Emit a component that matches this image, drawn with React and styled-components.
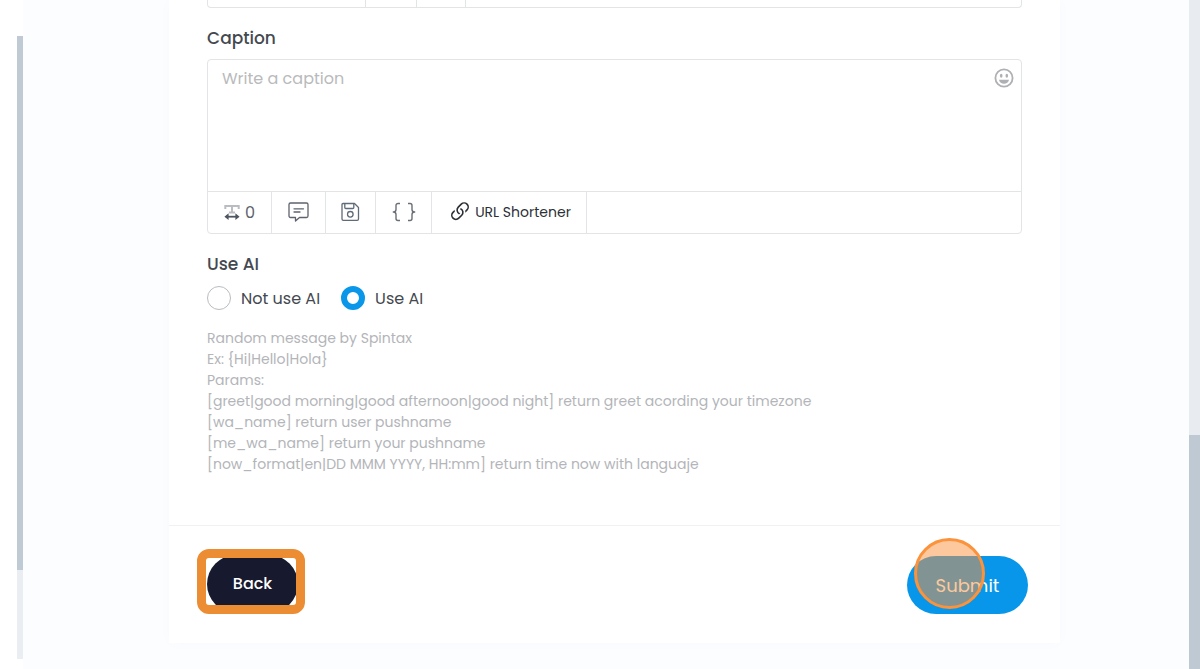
import { useState } from "react";
import styled, { createGlobalStyle } from "styled-components";
import { BsLink45Deg } from "react-icons/bs";

const hints = [
  "Random message by Spintax",
  "Ex: {Hi|Hello|Hola}",
  "Params:",
  "[greet|good morning|good afternoon|good night] return greet acording your timezone",
  "[wa_name] return user pushname",
  "[me_wa_name] return your pushname",
  "[now_format|en|DD MMM YYYY, HH:mm] return time now with languaje",
];

const App = () => {
  const [caption, setCaption] = useState("");
  const [ai, setAi] = useState("use");

  return (
    <Page>
      <GlobalStyle />
      <Sidebar>
        <SideTrack>
          <SideThumb />
        </SideTrack>
      </Sidebar>
      <Main>
        <Card>
          <Body>
            <PrevToolbar>
              <PrevCell $width={158} />
              <PrevCell $width={51} />
              <PrevCell $width={49} />
            </PrevToolbar>

            <Label htmlFor="caption">Caption</Label>
            <Editor>
              <InputRow>
                <TextArea
                  id="caption"
                  placeholder="Write a caption"
                  value={caption}
                  onChange={(e) => setCaption(e.target.value)}
                />
                <EmojiButton type="button" aria-label="Insert emoji">
                  <EmojiIcon />
                </EmojiButton>
              </InputRow>
              <Toolbar>
                <Counter>
                  <WidthIcon />
                  {caption.length}
                </Counter>
                <Tool type="button" $width={54} aria-label="Saved captions">
                  <CommentIcon />
                </Tool>
                <Tool type="button" $width={50} aria-label="Save caption">
                  <SaveIcon />
                </Tool>
                <Tool type="button" $width={56} aria-label="Variables">
                  <BracesIcon />
                </Tool>
                <Tool type="button" $width={155}>
                  <BsLink45Deg size={26} />
                  URL Shortener
                </Tool>
              </Toolbar>
            </Editor>

            <Group>
              <Label as="legend">Use AI</Label>
              <Options>
                <Option>
                  <Radio
                    name="ai"
                    checked={ai === "none"}
                    onChange={() => setAi("none")}
                  />
                  Not use AI
                </Option>
                <Option>
                  <Radio
                    name="ai"
                    checked={ai === "use"}
                    onChange={() => setAi("use")}
                  />
                  Use AI
                </Option>
              </Options>
            </Group>

            <Hints>
              {hints.map((hint) => (
                <li key={hint}>{hint}</li>
              ))}
            </Hints>
          </Body>

          <Footer>
            <Highlight>
              <BackButton type="button">Back</BackButton>
            </Highlight>
            <SubmitButton type="submit">
              Submit
              <ClickMark />
            </SubmitButton>
          </Footer>
        </Card>
      </Main>
      <PageTrack>
        <PageThumb />
      </PageTrack>
    </Page>
  );
};

export default App;

const EmojiIcon = () => (
  <svg width="20" height="20" viewBox="0 0 20 20" fill="none">
    <circle cx="10" cy="10" r="8.6" stroke="#aeb0b3" strokeWidth="1.8" />
    <ellipse cx="7.2" cy="7.8" rx="1.3" ry="2" fill="#aeb0b3" />
    <ellipse cx="12.8" cy="7.8" rx="1.3" ry="2" fill="#aeb0b3" />
    <path d="M5 11.8h10c-.5 2.6-2.5 4-5 4s-4.5-1.4-5-4z" fill="#aeb0b3" />
  </svg>
);

const WidthIcon = () => (
  <svg width="16" height="16" viewBox="0 0 16 16" fill="none">
    <path d="M1.3 4V1h13.4v3M8 1v7M5 7.5h6" stroke="#b9bdc2" strokeWidth="2" />
    <path d="M2 11.700h12" stroke="#4f5660" strokeWidth="1.8" />
    <path d="M4.600 8.300L.4 11.700l4.200 3.400zM11.400 8.300l4.200 3.400-4.200 3.400z" fill="#4f5660" />
  </svg>
);

const CommentIcon = () => (
  <svg width="22" height="22" viewBox="0 0 22 22" fill="none" stroke="#5e646d" strokeWidth="1.3" strokeLinejoin="round" strokeLinecap="round">
    <path d="M2.500 2h16A1.500 1.500 0 0 1 20 3.500V15a1.500 1.500 0 0 1-1.500 1.500h-7l-4 3.500v-3.500h-5A1.500 1.500 0 0 1 1 15V3.500A1.500 1.500 0 0 1 2.500 2z" />
    <path d="M6 7.800h9.500M6 11h6" />
  </svg>
);

const SaveIcon = () => (
  <svg width="20" height="20" viewBox="0 0 20 20" fill="none" stroke="#5e6b78" strokeWidth="1.3" strokeLinejoin="round">
    <path d="M2 1.500h11.500l4 4v11.500a1.300 1.300 0 0 1-1.300 1.300H2.300A1.300 1.300 0 0 1 1 17V2.500a1 1 0 0 1 1-1z" />
    <path d="M3.800 1.500v4a1 1 0 0 0 1 1h7a1 1 0 0 0 1-1v-4" />
    <circle cx="9.3" cy="12.3" r="2.8" />
  </svg>
);

const BracesIcon = () => (
  <svg width="24" height="20" viewBox="0 0 24 20" fill="none" stroke="#6a7077" strokeWidth="1.4" strokeLinejoin="round">
    <path d="M8 1.500H6a2 2 0 0 0-2 2V7.500Q4 10 1.300 10Q4 10 4 12.500v4a2 2 0 0 0 2 2h2" />
    <path d="M16 1.500h2a2 2 0 0 1 2 2V7.500Q20 10 22.700 10Q20 10 20 12.500v4a2 2 0 0 1-2 2h-2" />
  </svg>
);

const GlobalStyle = createGlobalStyle`
  * {
    box-sizing: border-box;
  }

  body {
    margin: 0;
    background-color: #fcfdff;
    color: #444950;
    font-family: Poppins, Inter, sans-serif;
    font-size: 16px;
  }

  button, textarea {
    font-family: inherit;
  }
`;

const Page = styled.div`
  display: flex;
  min-height: 100vh;
`;

const Sidebar = styled.aside`
  display: flex;
  justify-content: flex-end;
  width: 23px;
  padding: 36px 0 10px;
  background-color: white;
`;

const SideTrack = styled.div`
  display: flex;
  flex-direction: column;
  width: 6px;
  background-color: #eaedf1;

  &::after {
    content: "";
    flex: 1;
  }
`;

const SideThumb = styled.div`
  flex: 6;
  background-color: #c0cad4;
`;

const PageTrack = styled.div`
  display: flex;
  flex-direction: column;
  width: 11px;
  background-color: #e8ecf0;

  &::before {
    content: "";
    flex: 13;
  }
`;

const PageThumb = styled.div`
  flex: 7;
  background-color: #bfc9d4;
`;

const Main = styled.main`
  flex: 1;
  min-width: 0;
  padding: 0 129px 26px 146px;
`;

const Card = styled.form`
  background-color: white;
  box-shadow: 0 0 14px rgba(60, 80, 140, 0.02);
`;

const Body = styled.div`
  padding: 0 38px 50px;
`;

const PrevToolbar = styled.div`
  display: flex;
  height: 8px;
  border: 1px solid #e2e4e6;
  border-top: none;
  border-radius: 0 0 4px 4px;
`;

const PrevCell = styled.div`
  width: ${({ $width }) => $width}px;
  border-right: 1px solid #e2e4e6;
`;

const Label = styled.label`
  display: block;
  padding: 0;
  margin: 18px 0 9px;
  font-size: 17px;
  font-weight: 500;
  line-height: 24px;
`;

const Editor = styled.div`
  border: 1px solid #e2e4e6;
  border-radius: 4px;
`;

const InputRow = styled.div`
  display: flex;
  align-items: flex-start;
  padding-right: 7px;
`;

const TextArea = styled.textarea`
  flex: 1;
  height: 131px;
  padding: 7px 14px;
  border: none;
  outline: none;
  resize: none;
  background: transparent;
  color: #444950;
  font-size: 16px;
  line-height: 24px;

  &::placeholder {
    color: #b9babc;
    opacity: 1;
  }
`;

const EmojiButton = styled.button`
  display: flex;
  padding: 0;
  margin-top: 8px;
  border: none;
  background: none;
  cursor: pointer;
`;

const Toolbar = styled.div`
  display: flex;
  height: 42px;
  border-top: 1px solid #e2e4e6;
`;

const Counter = styled.div`
  display: flex;
  align-items: center;
  justify-content: center;
  gap: 5px;
  width: 64px;
  border-right: 1px solid #e2e4e6;
  color: #5e646d;
`;

const Tool = styled.button`
  display: flex;
  align-items: center;
  justify-content: center;
  gap: 2px;
  width: ${({ $width }) => $width}px;
  padding: 0 0 1px;
  border: none;
  border-right: 1px solid #e2e4e6;
  background: none;
  color: #2b2f36;
  font-size: 14px;
  white-space: nowrap;
  cursor: pointer;
`;

const Group = styled.fieldset`
  margin: 18px 0 17px;
  padding: 0;
  border: none;

  legend {
    margin-top: 0;
  }
`;

const Options = styled.div`
  display: flex;
  gap: 21px;
`;

const Option = styled.label`
  display: flex;
  align-items: center;
  gap: 10px;
  height: 26px;
  cursor: pointer;
`;

const Radio = styled.input.attrs({ type: "radio" })`
  appearance: none;
  width: 24px;
  height: 24px;
  margin: 0;
  border: 1px solid #b8bcc1;
  border-radius: 50%;
  background-color: white;

  &:checked {
    border: 6px solid #0a97ea;
  }
`;

const Hints = styled.ul`
  margin: 0;
  padding: 0;
  list-style: none;
  color: #b3b5b9;
  font-size: 14px;
  line-height: 21px;
`;

const Footer = styled.footer`
  display: flex;
  align-items: flex-end;
  justify-content: space-between;
  padding: 23px 32px 29px 28px;
  border-top: 1px solid #eff1f3;
`;

const Highlight = styled.div`
  display: flex;
  align-items: center;
  width: 108px;
  height: 65px;
  padding: 4px 0 0 1px;
  border: 9px solid #ed8d33;
  border-radius: 12px;
  overflow: hidden;
`;

const BackButton = styled.button`
  flex: none;
  width: 91px;
  height: 58px;
  padding: 0;
  border: none;
  border-radius: 29px;
  background-color: #17192e;
  color: white;
  font-size: 16px;
  font-weight: 500;
  cursor: pointer;
`;

const SubmitButton = styled.button`
  position: relative;
  width: 121px;
  height: 58px;
  padding: 0;
  border: none;
  border-radius: 29px;
  background-color: #0796ea;
  color: white;
  font-size: 18px;
  cursor: pointer;
`;

/* pointer position marker over the button */
const ClickMark = styled.span`
  position: absolute;
  top: -18px;
  left: 7px;
  width: 71px;
  height: 71px;
  border: 3px solid #fb923c;
  border-radius: 50%;
  background-color: rgba(251, 146, 60, 0.5);
`;
